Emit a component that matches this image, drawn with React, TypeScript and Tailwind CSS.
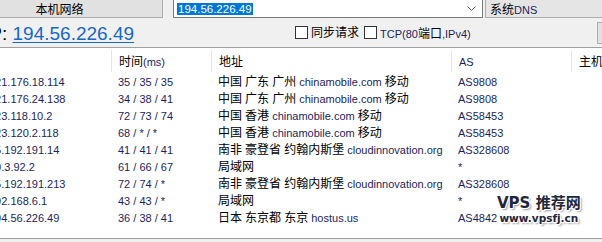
import { Fragment } from 'react'

type Hop = {
  ip: string
  time: string
  addr: string
  as: string
}

const hops: Hop[] = [
  { ip: '221.176.18.114', time: '35 / 35 / 35', addr: '中国 广东 广州 chinamobile.com 移动', as: 'AS9808' },
  { ip: '221.176.24.138', time: '34 / 38 / 41', addr: '中国 广东 广州 chinamobile.com 移动', as: 'AS9808' },
  { ip: '223.118.10.2', time: '72 / 73 / 74', addr: '中国 香港 chinamobile.com 移动', as: 'AS58453' },
  { ip: '223.120.2.118', time: '68 / * / *', addr: '中国 香港 chinamobile.com 移动', as: 'AS58453' },
  { ip: '45.192.191.14', time: '41 / 41 / 41', addr: '南非 豪登省 约翰内斯堡 cloudinnovation.org', as: 'AS328608' },
  { ip: '10.3.92.2', time: '61 / 66 / 67', addr: '局域网', as: '*' },
  { ip: '45.192.191.213', time: '72 / 74 / *', addr: '南非 豪登省 约翰内斯堡 cloudinnovation.org', as: 'AS328608' },
  { ip: '192.168.6.1', time: '43 / 43 / *', addr: '局域网', as: '*' },
  { ip: '194.56.226.49', time: '36 / 38 / 41', addr: '日本 东京都 东京 hostus.us', as: 'AS4842' },
]

const FONT = "font-['Liberation_Sans','Noto_Sans_CJK_SC',sans-serif]"
const CJK = /[\u3400-\u9fff\uff00-\uffef]/

// CJK runs get 12px black, latin runs 11px navy (like the windows renderer)
function Mixed({ text }: { text: string }) {
  const parts = text.split(/([\u3400-\u9fff\uff00-\uffef]+)/)
  return (
    <span className="whitespace-pre">
      {parts.map((p, i) =>
        CJK.test(p) ? (
          <span key={i} className="text-[12px] text-black">{p}</span>
        ) : (
          <span key={i} className="text-[11px] text-[#1b1f5e]">{p}</span>
        )
      )}
    </span>
  )
}

function Checkbox() {
  return <span className="block w-[13px] h-[13px] border border-[#333] bg-white shrink-0" />
}

export default function App() {
  return (
    <div className={`relative w-[602px] h-[242px] overflow-hidden bg-[#f0f0f0] ${FONT}`}>
      {/* 顶部：按钮 / 地址框 / DNS */}
      <div className="flex h-[18px]">
        <div className="ml-[-43px] w-[206px] h-[18px] bg-[#e1e1e1] border-b border-r border-[#adadad] flex items-center justify-center pt-[2px] text-[12px] text-black">
          本机网络
        </div>
        <div className="ml-[10px] w-[310px] h-[18px] bg-white border-b border-x border-[#7a7a7a] flex items-center pl-[3px] relative">
          <span className="bg-[#0078d7] text-white text-[11.5px] leading-[12px] px-[1px] mt-[1px]">194.56.226.49</span>
          <svg className="absolute right-[6px] top-[6px]" width="9" height="6" viewBox="0 0 9 6">
            <polyline points="0.5,0.5 4.5,4.5 8.5,0.5" fill="none" stroke="#606060" strokeWidth="1" />
          </svg>
        </div>
        <div className="ml-[2px] flex-1 h-[18px] bg-[#e5e5e5] border-b border-l border-[#adadad] pl-[4px] pt-[1px] leading-[16px]">
          <Mixed text="系统DNS" />
        </div>
      </div>

      {/* IP 行 */}
      <div className="flex items-center h-[29px]">
        <div className="ml-[-16px] w-[311px] shrink-0 text-[19px] leading-[24px] text-black whitespace-nowrap pt-[2px]">
          IP: <span className="text-[#1668c6] underline underline-offset-[2px]">194.56.226.49</span>
        </div>
        <Checkbox />
        <span className="ml-[3px] text-[12px] text-black">同步请求</span>
        <span className="ml-[5px]"><Checkbox /></span>
        <span className="ml-[3px] whitespace-nowrap">
          <Mixed text="TCP(80端口,IPv4)" />
        </span>
        <div className="ml-auto w-[20px] h-[22px] mr-[-15px] bg-[#e1e1e1] border border-[#adadad]" />
      </div>

      {/* 路由表 */}
      <div className="h-[191px] bg-white border-t border-[#a0a0a0] overflow-hidden">
        <div className="ml-[-18px] grid grid-cols-[130px_100px_240px_120px_100px] whitespace-nowrap">
          {['', '时间(ms)', '地址', 'AS', '主机'].map((h, i) => (
            <div key={i} className="h-[24px] pt-[2px]">
              <div className="h-[22px] border-r border-[#e5e5e5] pl-[7px] leading-[22px]">
                <Mixed text={h} />
              </div>
            </div>
          ))}
          {hops.map((r, i) => (
            <Fragment key={i}>
              <div className="h-[17px] pl-[7px] leading-[17px]"><Mixed text={r.ip} /></div>
              <div className="h-[17px] pl-[6px] leading-[17px]"><Mixed text={r.time} /></div>
              <div className="h-[17px] pl-[6px] leading-[17px]"><Mixed text={r.addr} /></div>
              <div className="h-[17px] pl-[6px] leading-[17px]"><Mixed text={r.as} /></div>
              <div className="h-[17px]" />
            </Fragment>
          ))}
        </div>
      </div>
      <div className="h-[4px] border-t border-[#a0a0a0] bg-[#f0f0f0]" />

      {/* 水印 */}
      <div className="absolute left-[497px] top-[195px] flex flex-col items-center text-[#23263a] font-bold font-['DejaVu_Sans','Noto_Sans_CJK_SC',sans-serif] [text-shadow:1px_1px_0_#fff,-1px_-1px_0_#fff,1px_-1px_0_#fff,-1px_1px_0_#fff,2px_2px_2px_#999]">
        <span className="text-[15px] leading-[17px]">VPS 推荐网</span>
        <span className="text-[10.5px] leading-[13px]">www.vpsfj.cn</span>
      </div>
    </div>
  )
}
